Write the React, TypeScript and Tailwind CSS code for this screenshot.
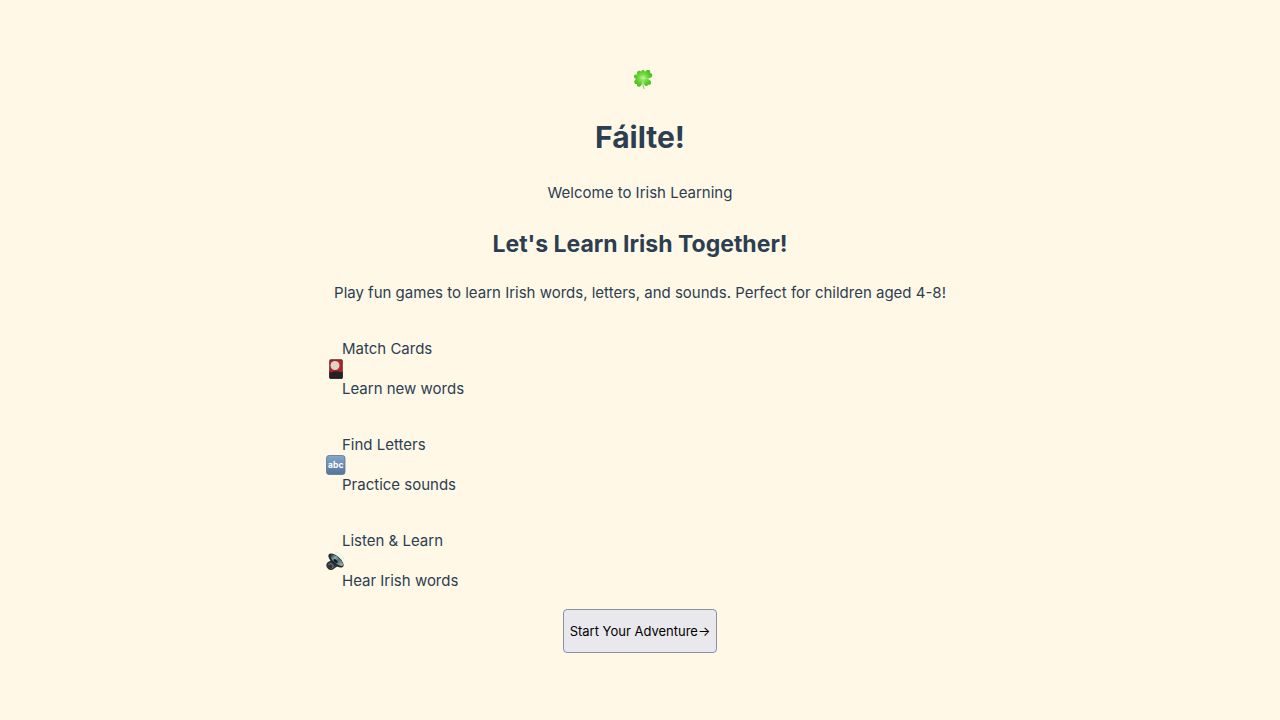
import type { ReactNode } from "react";

function Shamrock() {
  return (
    <svg viewBox="0 0 40 40" className="h-5 w-5 shrink-0" aria-hidden="true">
      <defs>
        <radialGradient id="leaf" gradientUnits="userSpaceOnUse" cx="20" cy="18" r="19">
          <stop offset="0" stopColor="#b9ef94" />
          <stop offset="0.45" stopColor="#74d83f" />
          <stop offset="1" stopColor="#3fbd14" />
        </radialGradient>
      </defs>
      <path d="M20 18C12 17 7 12 8 7C9 3 14 2 16 5C19 0 25 2 24 8C24 12 22 15 20 18Z" fill="url(#leaf)" />
      <path d="M21 18C21 10 24 3 29 2C33 1 36 4 34 8C39 8 40 14 36 17C31 20 26 20 21 18Z" fill="url(#leaf)" />
      <path d="M21 19C28 18 35 21 36 26C37 30 34 33 30 31C29 35 25 35 23 32C20 28 20 23 21 19Z" fill="url(#leaf)" />
      <path d="M19 19C20 26 18 33 14 35C10 36 7 34 8 30C3 31 1 26 4 22C8 18 14 17 19 19Z" fill="url(#leaf)" />
      <path d="M18 19C12 21 6 21 3 18C1 15 2 11 6 11C11 11 15 15 18 19Z" fill="url(#leaf)" />
      <path d="M20 19C19 27 20 34 22 39" fill="none" stroke="#8ed668" strokeWidth="2.4" strokeLinecap="round" />
    </svg>
  );
}

function FlowerCard() {
  return (
    <svg viewBox="0 0 40 40" className="h-5 w-5 shrink-0" aria-hidden="true">
      <rect x="6.5" y="0.5" width="27" height="39" rx="3" fill="#5b2323" />
      <rect x="8.5" y="2.5" width="23" height="35" fill="#b3242a" />
      <circle cx="18" cy="13" r="9" fill="#ded3c4" />
      <path d="M8 28Q18 22 32 27V38H8Z" fill="#202225" />
      <path d="M7 25V37Q7 39 10 39H30Q33 39 33 37V25" fill="none" stroke="#35302f" strokeWidth="2" />
    </svg>
  );
}

function LetterBlock() {
  return (
    <svg viewBox="0 0 40 40" className="h-5 w-5 shrink-0" aria-hidden="true">
      <defs>
        <linearGradient id="block" x1="0" y1="0" x2="0" y2="1">
          <stop offset="0" stopColor="#86a7c8" />
          <stop offset="1" stopColor="#53749a" />
        </linearGradient>
      </defs>
      <rect x="1" y="1" width="37" height="38" rx="5" fill="url(#block)" stroke="#587796" strokeWidth="1.6" />
      <text x="19.5" y="25" textAnchor="middle" fill="white" fontFamily="Inter, sans-serif" fontWeight="700" fontSize="17">
        abc
      </text>
    </svg>
  );
}

function Speaker() {
  return (
    <svg viewBox="0 0 40 40" className="h-5 w-5 shrink-0" aria-hidden="true">
      <defs>
        <linearGradient id="cone" x1="0" y1="0" x2="1" y2="0">
          <stop offset="0" stopColor="#18262c" />
          <stop offset="0.35" stopColor="#8eaab0" />
          <stop offset="0.6" stopColor="#536d75" />
          <stop offset="1" stopColor="#a9b7ba" />
        </linearGradient>
      </defs>
      <path d="M1 26C4 20 8 21 12 17L25 30C20 31 17 36 12 38C5 39 -1 32 1 26Z" fill="#30363b" />
      <path d="M5 27Q10 23 14 28Q16 33 11 35" fill="none" stroke="#777f82" strokeWidth="2" />
      <ellipse cx="20" cy="19" rx="19" ry="8.5" transform="rotate(41 20 19)" fill="#202b30" />
      <ellipse cx="21" cy="18" rx="16.5" ry="6" transform="rotate(41 21 18)" fill="url(#cone)" />
      <ellipse cx="19" cy="20" rx="5" ry="2.8" transform="rotate(41 19 20)" fill="#101b20" />
      <path d="M18 2Q33 5 37 20M23 7Q31 11 33 18" fill="none" stroke="#cdebe4" strokeWidth="1.2" />
    </svg>
  );
}

type Feature = { icon: ReactNode; title: string; text: string };

const features: Feature[] = [
  { icon: <FlowerCard />, title: "Match Cards", text: "Learn new words" },
  { icon: <LetterBlock />, title: "Find Letters", text: "Practice sounds" },
  { icon: <Speaker />, title: "Listen & Learn", text: "Hear Irish words" },
];

export default function App() {
  return (
    <div className="flex min-h-screen flex-col items-center justify-center bg-[#fff8e7] font-['Inter',sans-serif] text-[15px] leading-6 text-[#2c3e50]">
      <header className="flex flex-col items-center text-center">
        <div className="flex h-6 items-center pl-1.5">
          <Shamrock />
        </div>
        <h1 className="mt-[22px] mb-5 text-[30px] leading-12 font-bold">Fáilte!</h1>
        <p>Welcome to Irish Learning</p>
      </header>
      <main className="flex w-full max-w-[628px] flex-col items-center">
        <h2 className="mt-[22px] mb-5 text-[23px] leading-[34px] font-bold">Let's Learn Irish Together!</h2>
        <p className="text-center">
          Play fun games to learn Irish words, letters, and sounds. Perfect for children aged 4-8!
        </p>
        <ul className="mt-4 self-stretch">
          {features.map((feature) => (
            <li key={feature.title} className="flex items-center">
              <span className="flex w-4">{feature.icon}</span>
              <div className="flex flex-col gap-4 py-4">
                <p>{feature.title}</p>
                <p>{feature.text}</p>
              </div>
            </li>
          ))}
        </ul>
        <button
          type="button"
          className="flex h-11 items-center rounded border border-[#8f8f9d] bg-[#e9e9ed] px-1.5 text-[13px] text-black"
        >
          <span>Start Your Adventure</span>
          <span>→</span>
        </button>
      </main>
    </div>
  );
}
